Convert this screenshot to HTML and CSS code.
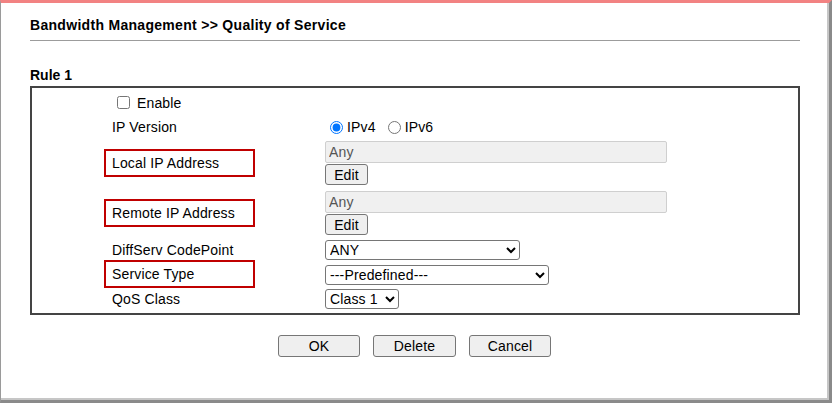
FILE: index.html
```html
<!DOCTYPE html>
<html>
<head>
<meta charset="utf-8">
<title>Quality of Service</title>
<link rel="stylesheet" href="styles.css">
</head>
<body>
<div class="frame">
  <div class="title">Bandwidth Management &gt;&gt; Quality of Service</div>
  <div class="rule-line"></div>
  <div class="rule-title">Rule 1</div>
  <div class="box">
    <div class="row r-enable">
      <label class="enable"><input type="checkbox" class="chk"><span>Enable</span></label>
      <div></div>
    </div>
    <div class="row r-ipver">
      <div class="lbl">IP Version</div>
      <div class="radios">
        <label class="radio-opt"><input type="radio" name="ipv" checked><span>IPv4</span></label>
        <label class="radio-opt"><input type="radio" name="ipv"><span>IPv6</span></label>
      </div>
    </div>
    <div class="row r-addr r-local">
      <div class="lbl hl">Local IP Address</div>
      <div class="addr">
        <input type="text" class="any" value="Any" readonly>
        <button class="btn btn-edit">Edit</button>
      </div>
    </div>
    <div class="row r-addr r-remote">
      <div class="lbl hl">Remote IP Address</div>
      <div class="addr">
        <input type="text" class="any" value="Any" readonly>
        <button class="btn btn-edit">Edit</button>
      </div>
    </div>
    <div class="row r-diff">
      <div class="lbl">DiffServ CodePoint</div>
      <div><select class="sel sel-diff"><option>ANY</option></select></div>
    </div>
    <div class="row r-service">
      <div class="lbl hl">Service Type</div>
      <div><select class="sel sel-service"><option>---Predefined---</option></select></div>
    </div>
    <div class="row r-qos">
      <div class="lbl">QoS Class</div>
      <div><select class="sel sel-qos"><option>Class 1</option></select></div>
    </div>
  </div>
  <div class="actions">
    <button class="btn btn-act btn-ok">OK</button>
    <button class="btn btn-act btn-del">Delete</button>
    <button class="btn btn-act btn-cancel">Cancel</button>
  </div>
</div>
</body>
</html>
```
FILE: styles.css
```css
html, body {
  margin: 0;
  padding: 0;
  background: #fff;
}

body {
  font-family: "Liberation Sans", Arial, sans-serif;
  font-size: 14px;
  color: #000;
}

.frame {
  width: 832px;
  height: 403px;
  box-sizing: border-box;
  border-top: 3px solid #f28282;
  border-left: 1px solid #9a9a9a;
  border-right: 3px solid #8a8a8a;
  border-bottom: 3px solid #8a8a8a;
  box-shadow: inset -2px -2px 0 #c6c6c6;
  padding: 14px 29px 0 29px;
  overflow: hidden;
}

.title {
  font-weight: bold;
  font-size: 14px;
  line-height: 16px;
  letter-spacing: 0.3px;
  height: 16px;
}

.rule-line {
  margin-top: 7px;
  height: 1px;
  background: #9c9c9c;
}

.rule-title {
  margin-top: 26px;
  font-weight: bold;
  line-height: 16px;
  height: 16px;
}

.box {
  margin-top: 3px;
  border: 2px solid #444;
  padding: 2px 0 4px 72px;
  display: flex;
  flex-direction: column;
  letter-spacing: 0.15px;
}

.row {
  display: grid;
  grid-template-columns: 221px 1fr;
  align-items: center;
}

.r-enable { height: 25px; }
.r-ipver { height: 24px; }
.r-local { height: 44px; margin-top: 2px; }
.r-remote { height: 44px; margin-top: 6px; }
.r-diff { height: 20px; margin-top: 5px; }
.r-service { height: 28px; }
.r-qos { height: 20px; margin-top: 1px; }

.enable {
  display: flex;
  align-items: center;
  padding-left: 13px;
}

.chk {
  width: 13px;
  height: 13px;
  margin: 0 7px 0 0;
}

.lbl {
  padding-left: 8px;
  line-height: 16px;
}

.lbl.hl {
  box-sizing: border-box;
  width: 151px;
  height: 28px;
  border: 2px solid #c00000;
  padding-left: 6px;
  display: flex;
  align-items: center;
}

.radios {
  display: flex;
  align-items: center;
}

.radio-opt {
  display: inline-flex;
  align-items: center;
}

.radio-opt input {
  width: 13px;
  height: 13px;
  margin: 0 4px 0 5px;
}

.radio-opt + .radio-opt {
  margin-left: 7px;
}

.addr {
  display: flex;
  flex-direction: column;
  align-items: flex-start;
}

.any {
  box-sizing: border-box;
  width: 342px;
  height: 22px;
  margin: 0;
  padding: 0 3px;
  border: 1px solid #cfcfcf;
  border-radius: 2px;
  background: #f0f0f0;
  color: #555;
  font-family: "Liberation Sans", Arial, sans-serif;
  font-size: 14px;
  letter-spacing: 0.15px;
  outline: none;
}

.btn {
  box-sizing: border-box;
  margin: 0;
  padding: 0;
  border: 1px solid #767676;
  border-radius: 3px;
  background: #efefef;
  color: #000;
  font-family: "Liberation Sans", Arial, sans-serif;
  font-size: 14px;
  letter-spacing: 0.15px;
}

.btn-edit {
  width: 43px;
  height: 21px;
  margin-top: 1px;
}

.sel {
  box-sizing: border-box;
  height: 20px;
  margin: 0;
  border: 1px solid #767676;
  border-radius: 3px;
  background: #fff;
  color: #000;
  font-family: "Liberation Sans", Arial, sans-serif;
  font-size: 14px;
  letter-spacing: 0.15px;
  display: block;
}

.sel-diff { width: 195px; }
.sel-service { width: 224px; margin-top: 1px; }
.sel-qos { width: 74px; }

.actions {
  margin-top: 20px;
  display: flex;
  justify-content: center;
  gap: 13px;
  padding-right: 1px;
}

.btn-act {
  height: 22px;
}

.btn-ok { width: 82px; }
.btn-del { width: 83px; }
.btn-cancel { width: 82px; }
```
